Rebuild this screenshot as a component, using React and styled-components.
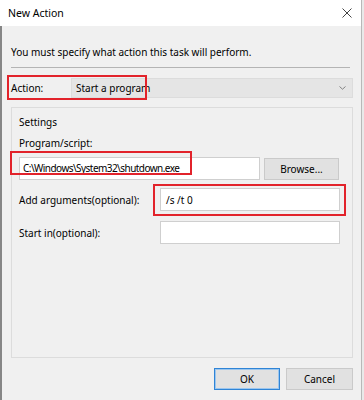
import React from 'react';
import styled, { createGlobalStyle } from 'styled-components';

const GlobalStyle = createGlobalStyle`
  html, body {
    margin: 0;
    padding: 0;
    background: #e9e9e9;
  }
  body {
    width: 364px;
    height: 400px;
    overflow: hidden;
    font-family: "Noto Sans", "Open Sans", sans-serif;
    font-size: 10px;
    color: #000;
  }
`;

const Window = styled.div`
  width: 362px;
  height: 400px;
  display: flex;
  flex-direction: column;
  border-right: 1px solid #b8b8b8;
  box-sizing: border-box;
`;

const TitleBar = styled.div`
  height: 26px;
  flex: none;
  background: #fff;
  display: flex;
  align-items: center;
  justify-content: space-between;
  padding: 0 9px 0 8px;
`;

const Title = styled.span`
  font-size: 10.5px;
  color: #000;
`;

const Body = styled.div`
  flex: 1;
  background: #f0f0f0;
  border-left: 2px solid #868686;
  padding: 0 8px 0 9px;
  display: flex;
  flex-direction: column;
`;

const Message = styled.div`
  margin-top: 19px;
  line-height: 14px;
`;

const Separator = styled.div`
  margin: 8px 3px 0 0;
  height: 1px;
  background: #b4b4b4;
`;

const Row = styled.div`
  position: relative;
  display: flex;
  align-items: center;
  margin-top: ${p => p.$gap}px;
`;

const Label = styled.span`
  width: ${p => (p.$width ? `${p.$width}px` : 'auto')};
  flex: ${p => (p.$width ? 'none' : '1')};
  line-height: 14px;
`;

const Combo = styled.div`
  flex: 1;
  height: 20px;
  background: #e5e5e5;
  border: 1px solid #dcdcdc;
  box-sizing: border-box;
  display: flex;
  align-items: center;
  justify-content: space-between;
  padding: 0 6px 0 4px;
`;

const Group = styled.div`
  margin-top: 9px;
  height: 251px;
  box-sizing: border-box;
  border: 1px solid #dcdcdc;
  padding: 7px 12px 0 7px;
  display: flex;
  flex-direction: column;
`;

const Caption = styled.div`
  line-height: 14px;
  margin-top: ${p => p.$gap || 0}px;
`;

const Field = styled.div`
  position: relative;
  width: ${p => p.$width}px;
  height: 23px;
  flex: none;
`;

const Input = styled.div`
  width: 100%;
  height: 100%;
  box-sizing: border-box;
  background: #fff;
  border: 1px solid #cfcfcf;
  padding: 0 ${p => p.$pad ?? 5}px ${p => (p.$tight ? 2 : 0)}px;
  letter-spacing: ${p => (p.$tight ? '-0.55px' : 'normal')};
  display: flex;
  align-items: center;
  white-space: nowrap;
`;

const Highlight = styled.div`
  position: absolute;
  left: ${p => p.$left}px;
  top: ${p => p.$top}px;
  width: ${p => p.$w}px;
  height: ${p => p.$h}px;
  border: 2px solid #e2232b;
  box-sizing: border-box;
  pointer-events: none;
`;

const Button = styled.button`
  width: ${p => p.$width}px;
  height: 22px;
  margin-left: ${p => p.$gap || 0}px;
  background: #e1e1e1;
  border: 1px solid ${p => (p.$default ? '#2f84d6' : '#cacaca')};
  box-shadow: ${p => (p.$default ? 'inset 0 0 0 1px #9cc6ee' : 'none')};
  font-family: inherit;
  font-size: 10px;
  color: #000;
  padding: 0;
  flex: none;
`;

const Footer = styled.div`
  margin-top: 10px;
  display: flex;
  justify-content: flex-end;
`;

const Close = () => (
  <svg width="10" height="10" viewBox="0 0 10 10">
    <path d="M0.5 0.5L9.5 9.5M9.5 0.5L0.5 9.5" stroke="#444" strokeWidth="1" fill="none" />
  </svg>
);

const Chevron = () => (
  <svg width="7" height="4" viewBox="0 0 7 4">
    <path d="M0.5 0.5L3.5 3.2L6.5 0.5" stroke="#777" strokeWidth="0.9" fill="none" />
  </svg>
);

export default function App() {
  return (
    <>
      <GlobalStyle />
      <Window>
        <TitleBar>
          <Title>New Action</Title>
          <Close />
        </TitleBar>
        <Body>
          <Message>You must specify what action this task will perform.</Message>
          <Separator />
          <Row $gap={10}>
            <Label $width={60}>Action:</Label>
            <Combo>
              <span>Start a program</span>
              <Chevron />
            </Combo>
            <Highlight $left={-4} $top={-3} $w={140} $h={25} />
          </Row>
          <Group>
            <Caption>Settings</Caption>
            <Caption $gap={7}>Program/script:</Caption>
            <Row $gap={7}>
              <Field $width={241}>
                <Input $pad={3} $tight>C:\Windows\System32\shutdown.exe</Input>
                <Highlight $left={-9} $top={-6} $w={182} $h={24} />
              </Field>
              <Button $width={75} $gap={4}>Browse...</Button>
            </Row>
            <Row $gap={8}>
              <Label>Add arguments(optional):</Label>
              <Field $width={180}>
                <Input>/s /t 0</Input>
                <Highlight $left={-7} $top={-4} $w={193} $h={32} />
              </Field>
            </Row>
            <Row $gap={10}>
              <Label>Start in(optional):</Label>
              <Field $width={180}>
                <Input />
              </Field>
            </Row>
          </Group>
          <Footer>
            <Button $width={66} $default>OK</Button>
            <Button $width={67} $gap={6}>Cancel</Button>
          </Footer>
        </Body>
      </Window>
    </>
  );
}
